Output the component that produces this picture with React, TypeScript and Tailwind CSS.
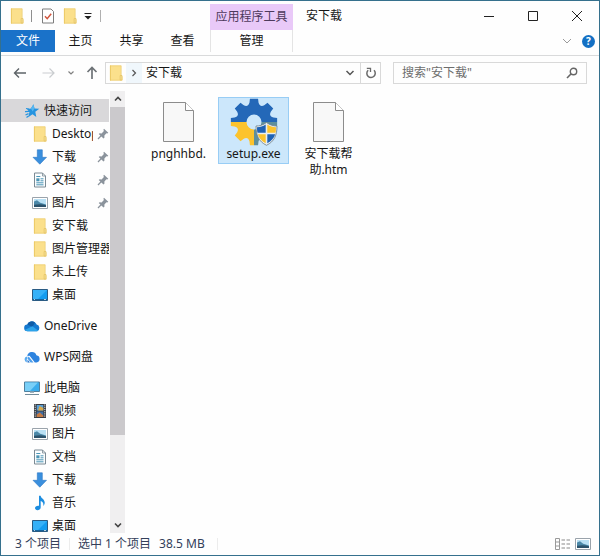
import React, { useState } from 'react';

type IconProps = { className?: string };

function FolderIcon({ className = 'w-4 h-4' }: IconProps) {
  return (
    <svg viewBox="0 0 16 16" className={className} aria-hidden="true">
      <path d="M2 .5h11.2v10l1.3 1v4H2z" fill="#fbe08c" />
      <path d="M2 .5h1v15H2z" fill="#f1cd6b" />
      <path d="M12.2 10.5h1.8v4.6h-1.8z" fill="#fff0b8" stroke="#dfbc58" strokeWidth=".7" />
      <path d="M2.3.8h10.9v14.4H2.3z" fill="none" stroke="#e8c766" strokeWidth=".6" />
    </svg>
  );
}

function StarIcon() {
  return (
    <svg viewBox="0 0 16 16" className="w-4 h-4" aria-hidden="true">
      <path d="M9.5 1.2l1 4.300 4.800.3-4 2.900 1 5.200-3.800-2.600-4.300 2.900 1.200-4.900L3 6.100l3.900-.6z" fill="#2694e0" />
      <path d="M9.5 1.2l1 4.300-1.800 2.900-1.800-2.900z" fill="#57b6f0" />
      <path d="M1 8.700l4-.3M1.500 12l3-1.400M2.500 14.500l2-1.500M2 5.500l3 .5" stroke="#2694e0" strokeWidth="1.200" />
    </svg>
  );
}

function DownloadIcon() {
  return (
    <svg viewBox="0 0 16 16" className="w-4 h-4" aria-hidden="true">
      <path d="M5.3.8h5v7.5h4.2L7.8 15.2 1 8.3h4.3z" fill="#3a8fdd" stroke="#2b77c4" strokeWidth=".6" />
    </svg>
  );
}

function DocumentIcon() {
  return (
    <svg viewBox="0 0 16 16" className="w-4 h-4" aria-hidden="true">
      <path d="M2.5 1h8l3 3v11h-11z" fill="#fbfdfe" stroke="#7b8a94" />
      <path d="M10.5 1v3h3" fill="none" stroke="#7b8a94" strokeWidth=".8" />
      <path d="M4.3 4.5h4M4.3 12.8h7.2M8.5 6.8h3M8.5 8.8h3M4.3 10.8h7.2" stroke="#4b95b5" strokeWidth="1" />
      <path d="M4.3 6.3h3.2v3H4.3z" fill="#4b95b5" />
    </svg>
  );
}

function PictureIcon() {
  return (
    <svg viewBox="0 0 16 16" className="w-4 h-4" aria-hidden="true">
      <path d="M.5 2.5h15v11H.5z" fill="#fff" stroke="#9aa3ab" />
      <path d="M2 4h12v8H2z" fill="#b9e0f4" />
      <path d="M2 6.5l3-1.2 3.2 2.4L14 9.5V12H2z" fill="#4b88a8" />
      <path d="M2 9.800c4-.8 8-.8 12 .4V12H2z" fill="#2c526b" />
    </svg>
  );
}

function DesktopIcon() {
  return (
    <svg viewBox="0 0 16 16" className="w-4 h-4" aria-hidden="true">
      <path d="M.5 2.5h15v11H.5z" fill="#149cf0" stroke="#2a5b83" />
      <path d="M1 3h14L5 13H1z" fill="#36b1f8" />
      <path d="M1 12h14v1H1z" fill="#15639d" />
      <path d="M2 12.5h1M12 12.5h2" stroke="#fff" strokeWidth=".7" />
    </svg>
  );
}

function OneDriveIcon() {
  return (
    <svg viewBox="0 0 16 16" className="w-4 h-4" aria-hidden="true">
      <path d="M3.4 6.6A5 5 0 0 1 12.6 6.500a3.500 3.500 0 0 1 .5 6.700H3.500A3.300 3.300 0 0 1 3.400 6.600z" fill="#1478cf" />
      <path d="M3.200 6.600a4.900 4.900 0 0 1 7.700-2.200L8.500 9z" fill="#0e5ba6" />
      <path d="M1 11.800l7.500-3.600 5.800 4.500-1.200.5H3.500A3.300 3.300 0 0 1 1 11.800z" fill="#2da4ea" />
    </svg>
  );
}

function WpsIcon() {
  return (
    <svg viewBox="0 0 16 16" className="w-4 h-4" aria-hidden="true">
      <path d="M3.300 7a4.700 4.700 0 0 1 9.100-.8A3.700 3.700 0 0 1 12.600 13.500H10.800L5.600 6.800z" fill="#2d83df" />
      <path d="M3.600 7.600A3 3 0 0 0 .6 10.600a2.900 2.900 0 0 0 2.200 2.800L2.800 10.500z" fill="#58aaf0" />
      <path d="M4.700 7.600l4.800 5.900H6.600L3.300 9.300z" fill="#4c9eec" />
      <path d="M3.500 10.400l2.300 3.100H3.500z" fill="#1c6cc9" />
    </svg>
  );
}

function ComputerIcon() {
  return (
    <svg viewBox="0 0 16 16" className="w-4 h-4" aria-hidden="true">
      <path d="M.5 2h15v9.500H.5z" fill="#3aacec" stroke="#517f9c" />
      <path d="M1 2.500h13L6 11H1z" fill="#79cff7" />
      <path d="M6 11.500h4V13H6z" fill="#9fb2bd" />
      <path d="M1 14.500h14" stroke="#718b9a" strokeWidth="1" />
    </svg>
  );
}

function VideoIcon() {
  return (
    <svg viewBox="0 0 16 16" className="w-4 h-4" aria-hidden="true">
      <path d="M2 1h12v14H2z" fill="#3a3d42" />
      <path d="M3.200 1.500v13M12.800 1.500v13" stroke="#dfe3e6" strokeWidth="1" strokeDasharray="1.200 1" />
      <path d="M4.700 2h6.600v5.500H4.700z" fill="#5b9fd4" />
      <path d="M4.700 8.500h6.600V14H4.700z" fill="#3f6ea6" />
      <path d="M7.500 3l3.800 2v2.500H6z" fill="#d9a94b" />
      <path d="M4.700 11.500l3-2 3.600 3V14H4.700z" fill="#c67b43" />
    </svg>
  );
}

function MusicIcon() {
  return (
    <svg viewBox="0 0 16 16" className="w-4 h-4" aria-hidden="true">
      <path d="M7 .8h1.700c.2 2.700 4.300 3.400 4 7.200-.1 1.300-.8 2.400-1.600 3.100.9-2.800-.4-4.300-2.400-5.100v6.300c0 1.700-1.400 2.900-3.100 2.900-1.500 0-2.600-.9-2.600-2.100 0-1.500 1.700-2.700 4-2.300z" fill="#1c8de0" />
    </svg>
  );
}

function PinIcon() {
  return (
    <svg viewBox="0 0 12 12" className="w-3 h-3 shrink-0" aria-hidden="true">
      <path d="M7 .8l4.300 4-1 .7-.9-.2-2 2.200v2.200l-.9.800-4.800-4.400.9-.8 2 .1L6.900 3l-.5-1.300z" fill="#8b939c" />
      <path d="M4.300 7.500L1 11" stroke="#8b939c" strokeWidth="1.200" />
    </svg>
  );
}

function BlankFileIcon() {
  return (
    <svg viewBox="0 0 48 48" className="w-12 h-12" aria-hidden="true">
      <path d="M8.500 4.500h22l8 8v31h-30z" fill="#f8f8f8" stroke="#8c8c8c" />
      <path d="M30.500 4.500v8h8" fill="#fff" stroke="#8c8c8c" />
    </svg>
  );
}

// eight broad teeth, the first one pointing straight up, with rounded valleys
const polar = (deg: number, r: number) => {
  const a = (deg * Math.PI) / 180;
  return `${(24 + r * Math.sin(a)).toFixed(2)} ${(24 - r * Math.cos(a)).toFixed(2)}`;
};
const gearTeeth = Array.from({ length: 8 }, (_, i) => {
  const mid = i * 45;
  return `${i ? 'L' : 'M'}${polar(mid - 10, 23.5)} L${polar(mid + 10, 23.5)} L${polar(mid + 13, 20)} Q${polar(mid + 22.5, 15.5)} ${polar(mid + 32, 20)}`;
}).join(' ');
const gearPath = `${gearTeeth}Z M31.5 24a7.500 7.500 0 1 0-15 0a7.500 7.500 0 1 0 15 0Z`;

function SetupIcon() {
  return (
    <svg viewBox="0 0 48 48" className="w-12 h-12" aria-hidden="true">
      <defs>
        <clipPath id="gear">
          <path d={gearPath} clipRule="evenodd" />
        </clipPath>
      </defs>
      <g clipPath="url(#gear)">
        <path d="M0 0h48v24H0z" fill="#2468b8" />
        <path d="M0 24h24v24H0z" fill="#fcc32d" />
        <path d="M24 24h24v24H24z" fill="#5e8f9c" />
      </g>
      <path d="M36.500 24.500c3.500 2.700 7 3.500 10.500 3.500 0 9-2.500 15.500-10.500 19.300C28.500 43.500 26 37 26 28c3.500 0 7-.8 10.500-3.500z" fill="#e8eef2" stroke="#6e7f88" strokeWidth=".8" />
      <path d="M35.700 26.600v8.100h-8.200c-.4-1.600-.5-3.200-.5-5.400 3.200-.1 6-.9 8.700-2.700z" fill="#1f62b4" />
      <path d="M37.300 26.600c2.700 1.800 5.500 2.600 8.700 2.700 0 2.200-.1 3.800-.5 5.400h-8.200z" fill="#fcc32d" />
      <path d="M27.800 36.300h7.900v9c-4.200-2.200-6.800-5.200-7.900-9z" fill="#fcc32d" />
      <path d="M37.300 36.300h7.900c-1.100 3.800-3.700 6.800-7.900 9z" fill="#1f62b4" />
    </svg>
  );
}

interface NavItem {
  label: string;
  Icon: React.ComponentType;
  pinned?: boolean;
}

interface NavGroup {
  label: string;
  Icon: React.ComponentType;
  items: NavItem[];
}

const NAV: NavGroup[] = [
  {
    label: '快速访问',
    Icon: StarIcon,
    items: [
      { label: 'Desktop', Icon: FolderIcon, pinned: true },
      { label: '下载', Icon: DownloadIcon, pinned: true },
      { label: '文档', Icon: DocumentIcon, pinned: true },
      { label: '图片', Icon: PictureIcon, pinned: true },
      { label: '安下载', Icon: FolderIcon },
      { label: '图片管理器', Icon: FolderIcon },
      { label: '未上传', Icon: FolderIcon },
      { label: '桌面', Icon: DesktopIcon },
    ],
  },
  { label: 'OneDrive', Icon: OneDriveIcon, items: [] },
  { label: 'WPS网盘', Icon: WpsIcon, items: [] },
  {
    label: '此电脑',
    Icon: ComputerIcon,
    items: [
      { label: '视频', Icon: VideoIcon },
      { label: '图片', Icon: PictureIcon },
      { label: '文档', Icon: DocumentIcon },
      { label: '下载', Icon: DownloadIcon },
      { label: '音乐', Icon: MusicIcon },
      { label: '桌面', Icon: DesktopIcon },
    ],
  },
];

const FILES = [
  { name: 'pnghhbd.', Icon: BlankFileIcon },
  { name: 'setup.exe', Icon: SetupIcon },
  { name: '安下载帮助.htm', Icon: BlankFileIcon },
];

function TitleBar() {
  return (
    <div className="flex h-[29px]">
      <div className="flex w-[209px] items-center pl-2">
        <FolderIcon />
        <span className="ml-1.5 h-3 w-px bg-[#8f8f8f]" />
        <button aria-label="属性" className="ml-2">
          <svg viewBox="0 0 16 16" className="w-4 h-4">
            <path d="M2.500 1h8.500l2.500 2.500V15h-11z" fill="#fff" stroke="#7d7d7d" />
            <path d="M5 8.200l2.200 2.500 4-5" fill="none" stroke="#d0563e" strokeWidth="1.500" />
          </svg>
        </button>
        <button aria-label="新建文件夹" className="ml-1.5">
          <FolderIcon />
        </button>
        <button aria-label="自定义快速访问工具栏" className="ml-1">
          <svg viewBox="0 0 12 12" className="w-3 h-3">
            <path d="M2.500 3.500h7" stroke="#222" />
            <path d="M2.500 6h7L6 9.500z" fill="#222" />
          </svg>
        </button>
        <span className="ml-1.5 h-3 w-px bg-[#b0b0b0]" />
      </div>
      <div className="mt-[3px] flex w-[83px] items-center justify-center bg-[#e9c9f8] text-[#4d3a5c]">应用程序工具</div>
      <h1 className="flex flex-1 items-center pl-[13px]">安下载</h1>
      <button aria-label="最小化" className="flex w-11 items-center justify-center">
        <svg viewBox="0 0 10 10" className="w-2.5 h-2.5">
          <path d="M0 5.500h10" stroke="#222" />
        </svg>
      </button>
      <button aria-label="最大化" className="flex w-11 items-center justify-center">
        <svg viewBox="0 0 10 10" className="w-2.5 h-2.5">
          <path d="M.5.5h9v9h-9z" fill="none" stroke="#222" />
        </svg>
      </button>
      <button aria-label="关闭" className="flex w-11 items-center justify-center">
        <svg viewBox="0 0 10 10" className="w-2.5 h-2.5">
          <path d="M0 0l10 10M10 0L0 10" stroke="#222" />
        </svg>
      </button>
    </div>
  );
}

function RibbonTabs() {
  return (
    <div className="flex border-b border-[#d9dadb] pb-[3px]">
      <nav className="flex h-[22px] w-[209px]">
        <button className="w-[54px] bg-[#1a72c9] text-white">文件</button>
        <button className="w-[51px]">主页</button>
        <button className="w-[51px]">共享</button>
        <button className="w-[51px]">查看</button>
      </nav>
      <button className="h-[22px] w-[83px] border-x border-[#e4e4e4]">管理</button>
      <div className="flex flex-1 items-center justify-end gap-2.5 pr-1">
        <button aria-label="展开功能区">
          <svg viewBox="0 0 10 10" className="w-2.5 h-2.5">
            <path d="M1 3l4 4 4-4" fill="none" stroke="#9a9a9a" />
          </svg>
        </button>
        <button aria-label="帮助" className="flex h-[13px] w-[13px] items-center justify-center rounded-full bg-[#1470c4] text-[10px] leading-3 font-bold text-white">
          ?
        </button>
      </div>
    </div>
  );
}

function AddressBar() {
  const [query, setQuery] = useState('');

  return (
    <div className="flex items-center pt-1.5 pr-3 pb-[7px]">
      <div className="flex w-[104px] items-center pl-3">
        <button aria-label="返回">
          <svg viewBox="0 0 14 14" className="w-3.5 h-3.5">
            <path d="M13 7H1.500M6 2.500L1.500 7 6 11.500" fill="none" stroke="#5e6468" strokeWidth="1.400" />
          </svg>
        </button>
        <button aria-label="前进" className="ml-3.5">
          <svg viewBox="0 0 14 14" className="w-3.5 h-3.5">
            <path d="M1.500 7h11M8.500 2.500L13 7l-4.500 4.500" fill="none" stroke="#c9cccf" strokeWidth="1.200" />
          </svg>
        </button>
        <button aria-label="最近位置" className="ml-3">
          <svg viewBox="0 0 8 8" className="w-2 h-2">
            <path d="M1.500 2.500L4 5l2.500-2.500" fill="none" stroke="#808080" strokeWidth="1.200" />
          </svg>
        </button>
        <button aria-label="向上" className="ml-2.5">
          <svg viewBox="0 0 14 14" className="w-3.5 h-3.5">
            <path d="M7 13V1.500M2.500 6L7 1.500 11.500 6" fill="none" stroke="#6e7377" strokeWidth="1.700" />
          </svg>
        </button>
      </div>
      <div className="flex h-[22px] flex-1 items-center border border-[#d9d9d9]">
        <span className="px-0.5">
          <FolderIcon />
        </span>
        <button aria-label="展开路径" className="flex h-full w-4 items-center justify-center bg-[#f0f7fc]">
          <svg viewBox="0 0 8 8" className="w-2 h-2">
            <path d="M2.500 1l3 3-3 3" fill="none" stroke="#555" strokeWidth="1.200" />
          </svg>
        </button>
        <button className="ml-1 flex-1 text-left">安下载</button>
        <button aria-label="以前的位置" className="flex h-full w-5 items-center justify-center">
          <svg viewBox="0 0 10 10" className="w-2.5 h-2.5">
            <path d="M1.500 3L5 6.500 8.500 3" fill="none" stroke="#555" strokeWidth="1.500" />
          </svg>
        </button>
        <button aria-label="刷新" className="flex h-full w-5 items-center justify-center border-l border-[#d9d9d9]">
          <svg viewBox="0 0 12 12" className="w-3 h-3">
            <path d="M9 3.300a4.200 4.200 0 1 1-5.800-.1" fill="none" stroke="#6a6a6a" strokeWidth="1.500" />
            <path d="M1.800 1.300h3.700v3.700" fill="none" stroke="#6a6a6a" strokeWidth="1.300" />
          </svg>
        </button>
      </div>
      <div className="ml-3 flex h-[22px] w-[194px] items-center border border-[#d9d9d9] px-2">
        <input
          type="search"
          aria-label="搜索"
          value={query}
          onChange={(e) => setQuery(e.target.value)}
          placeholder={'搜索"安下载"'}
          className="min-w-0 flex-1 bg-transparent outline-none placeholder:text-[#6d6d6d]"
        />
        <svg viewBox="0 0 12 12" className="w-3 h-3" aria-hidden="true">
          <circle cx="7.500" cy="4.500" r="3.200" fill="none" stroke="#666" strokeWidth="1.400" />
          <path d="M5.200 6.800L1 11" stroke="#666" strokeWidth="1.600" />
        </svg>
      </div>
    </div>
  );
}

function Sidebar() {
  return (
    <aside className="flex w-[124px] shrink-0 overflow-hidden">
      <nav className="flex w-[108px] flex-col gap-2 overflow-hidden pt-2">
        {NAV.map((group, i) => (
          <div key={group.label}>
            <a
              href="#"
              className={`flex h-[23px] items-center gap-1 pl-[23px] whitespace-nowrap ${i === 0 ? 'bg-[#d9d8da]' : ''}`}
            >
              <group.Icon />
              {group.label}
            </a>
            {group.items.map((item) => (
              <a key={item.label} href="#" className="flex h-[23px] items-center gap-1 pt-px pl-[31px] whitespace-nowrap">
                <span className="shrink-0">
                  <item.Icon />
                </span>
                <span className={item.pinned ? 'w-[42px] overflow-hidden' : ''}>{item.label}</span>
                {item.pinned && <PinIcon />}
              </a>
            ))}
          </div>
        ))}
      </nav>
      <div className="ml-px flex w-[15px] flex-col bg-[#f0eff0]">
        <button aria-label="向上滚动" className="flex h-4 items-center justify-center">
          <svg viewBox="0 0 8 8" className="w-2 h-2">
            <path d="M1 5.500l3-3 3 3" fill="none" stroke="#444" strokeWidth="1.600" />
          </svg>
        </button>
        <div className="flex-1">
          <div className="h-4/5 bg-[#cbc9cc]" />
        </div>
        <button aria-label="向下滚动" className="flex h-4 items-center justify-center">
          <svg viewBox="0 0 8 8" className="w-2 h-2">
            <path d="M1 2.500l3 3 3-3" fill="none" stroke="#444" strokeWidth="1.600" />
          </svg>
        </button>
      </div>
    </aside>
  );
}

function FileGrid() {
  const [selected, setSelected] = useState('setup.exe');

  return (
    <main className="flex flex-1 flex-wrap content-start items-start gap-1 pt-1.5 pl-[18px]">
      {FILES.map(({ name, Icon }) => (
        <button
          key={name}
          onClick={() => setSelected(name)}
          className={`flex w-[71px] flex-col items-center border px-2 pb-px ${
            selected === name ? 'border-[#98cdf5] bg-[#cce7fb]' : 'border-transparent'
          }`}
        >
          <Icon />
          <span className="leading-4">{name}</span>
        </button>
      ))}
    </main>
  );
}

function StatusBar() {
  return (
    <footer className="flex h-[22px] items-center pr-2 pl-3.5 text-[#33405a]">
      <span>3 个项目</span>
      <span className="mx-2 h-3 w-px bg-[#ececec]" />
      <span>选中 1 个项目</span>
      <span className="ml-2">38.5 MB</span>
      <span className="ml-3 h-3 w-px bg-[#ececec]" />
      <div className="ml-auto flex items-center gap-1">
        <button aria-label="详细信息">
          <svg viewBox="0 0 16 14" className="w-4 h-3.5">
            <path d="M.5 1.500h4v11h-4zM.5 5h4M.5 9h4" fill="none" stroke="#999" />
            <path d="M6.500 3H10M11.500 3H15M6.500 7H10M11.500 7H15M6.500 11H10M11.500 11H15" stroke="#888" />
          </svg>
        </button>
        <button aria-label="大缩略图">
          <PictureIcon />
        </button>
      </div>
    </footer>
  );
}

export default function App() {
  return (
    <div className="flex h-screen flex-col border border-[#35708d] bg-[#fefefe] font-['Noto_Sans','Noto_Sans_CJK_SC',sans-serif] text-[12px] leading-4 text-[#161616]">
      <header>
        <TitleBar />
        <RibbonTabs />
        <AddressBar />
      </header>
      <div className="flex min-h-0 flex-1">
        <Sidebar />
        <FileGrid />
      </div>
      <StatusBar />
    </div>
  );
}
